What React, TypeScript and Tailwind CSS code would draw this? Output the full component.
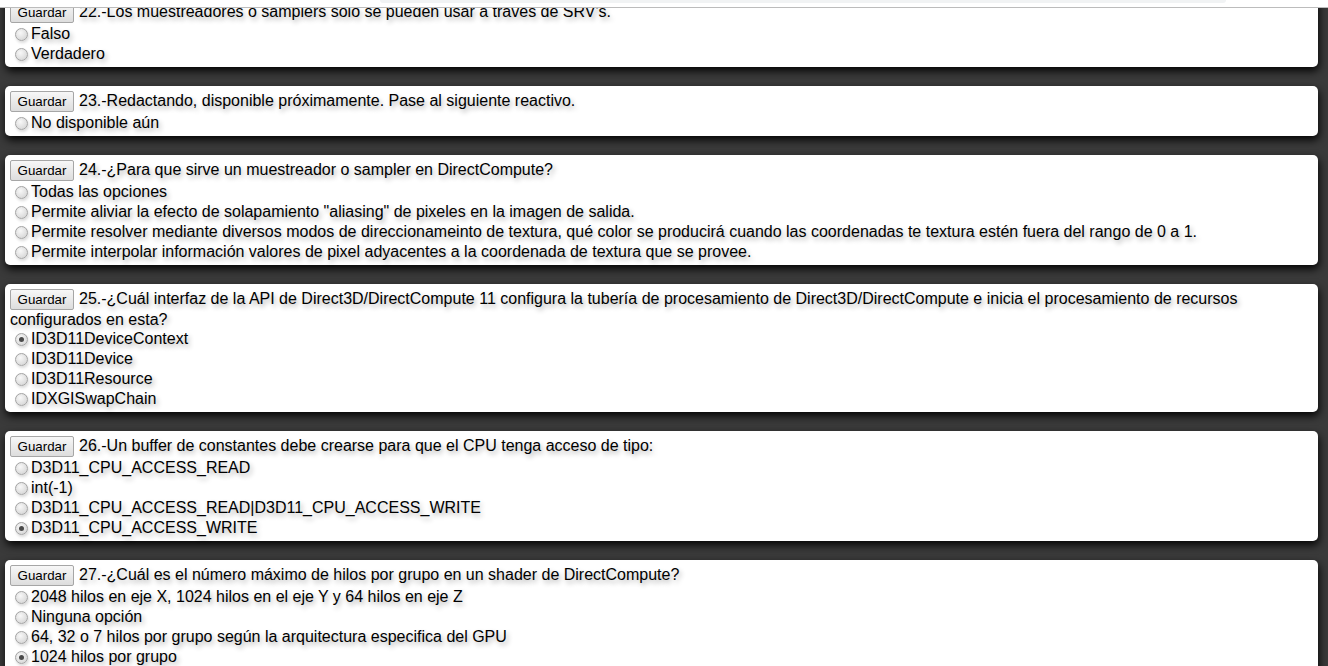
type Question = {
  num: number;
  text: string;
  options: string[];
  checked?: number;
};

const questions: Question[] = [
  {
    num: 22,
    text: "Los muestreadores o samplers solo se pueden usar a traves de SRV's.",
    options: ["Falso", "Verdadero"],
  },
  {
    num: 23,
    text: "Redactando, disponible próximamente. Pase al siguiente reactivo.",
    options: ["No disponible aún"],
  },
  {
    num: 24,
    text: "¿Para que sirve un muestreador o sampler en DirectCompute?",
    options: [
      "Todas las opciones",
      'Permite aliviar la efecto de solapamiento "aliasing" de pixeles en la imagen de salida.',
      "Permite resolver mediante diversos modos de direccionameinto de textura, qué color se producirá cuando las coordenadas te textura estén fuera del rango de 0 a 1.",
      "Permite interpolar información valores de pixel adyacentes a la coordenada de textura que se provee.",
    ],
  },
  {
    num: 25,
    text: "¿Cuál interfaz de la API de Direct3D/DirectCompute 11 configura la tubería de procesamiento de Direct3D/DirectCompute e inicia el procesamiento de recursos configurados en esta?",
    options: ["ID3D11DeviceContext", "ID3D11Device", "ID3D11Resource", "IDXGISwapChain"],
    checked: 0,
  },
  {
    num: 26,
    text: "Un buffer de constantes debe crearse para que el CPU tenga acceso de tipo:",
    options: [
      "D3D11_CPU_ACCESS_READ",
      "int(-1)",
      "D3D11_CPU_ACCESS_READ|D3D11_CPU_ACCESS_WRITE",
      "D3D11_CPU_ACCESS_WRITE",
    ],
    checked: 3,
  },
  {
    num: 27,
    text: "¿Cuál es el número máximo de hilos por grupo en un shader de DirectCompute?",
    options: [
      "2048 hilos en eje X, 1024 hilos en el eje Y y 64 hilos en eje Z",
      "Ninguna opción",
      "64, 32 o 7 hilos por grupo según la arquitectura especifica del GPU",
      "1024 hilos por grupo",
    ],
    checked: 3,
  },
];

const Radio = ({ on }: { on: boolean }) => (
  <span className="ml-[5px] mr-[3px] flex h-[13px] w-[13px] shrink-0 items-center justify-center rounded-full border border-[#a3a3a3] bg-[radial-gradient(circle_at_40%_35%,#f8f8f8,#cfcfcf)] shadow-[1px_2px_3px_rgba(0,0,0,0.15)]">
    {on && <span className="h-[5px] w-[5px] rounded-full bg-[#4a4a4a]" />}
  </span>
);

const Card = ({ q }: { q: Question }) => (
  <div className="rounded-[5px] bg-white pb-[3px] pl-[5px] pr-[5px] pt-[5px] text-[16px] text-black shadow-[1px_4px_9px_rgba(0,0,0,0.95)] [text-shadow:2px_3px_5px_rgba(0,0,0,0.32)]">
    <p className="leading-[18px]">
      <button className="mb-px mr-[5px] inline-block h-[21px] w-[64px] rounded-[2px] border border-[#a6a6a6] bg-gradient-to-b from-[#f7f7f7] to-[#dddddd] align-middle text-[13.33px] leading-[19px] [text-shadow:none]">
        Guardar
      </button>
      {q.num}.-{q.text}
    </p>
    {q.options.map((opt, i) => (
      <label key={i} className="flex h-5 items-center whitespace-nowrap">
        <Radio on={q.checked === i} />
        <span>{opt}</span>
      </label>
    ))}
  </div>
);

export default function App() {
  return (
    <div className="relative h-[666px] overflow-hidden bg-[#3a3a3a] font-['Liberation_Sans',Arial,sans-serif]">
      <div className="fixed inset-x-0 top-0 z-10 h-2 border-b border-[#bcbcbc] bg-white">
        <div className="ml-[380px] h-[3px] w-[846px] rounded-b-[4px] bg-[#f1f3f4]" />
      </div>
      <div className="-mt-[3px] flex flex-col gap-[19px] pl-[5px] pr-[10px]">
        {questions.map((q) => (
          <Card key={q.num} q={q} />
        ))}
      </div>
    </div>
  );
}
